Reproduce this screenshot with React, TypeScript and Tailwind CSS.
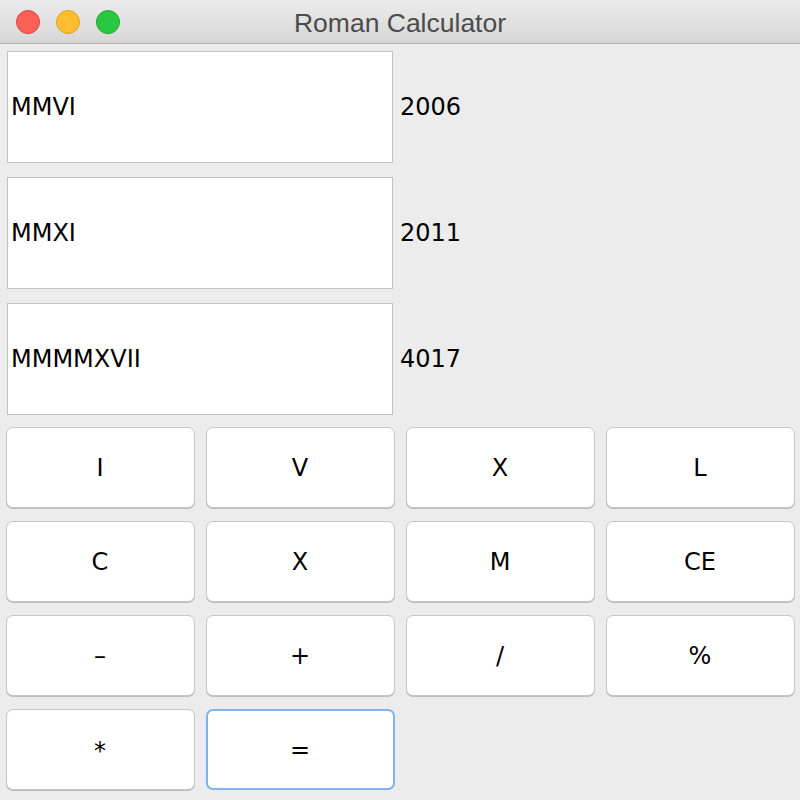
const fields = [
  { roman: "MMVI", value: "2006" },
  { roman: "MMXI", value: "2011" },
  { roman: "MMMMXVII", value: "4017" },
];

const keys = ["I", "V", "X", "L", "C", "X", "M", "CE", "-", "+", "/", "%", "*", "="];

function TrafficLights() {
  return (
    <div className="flex items-center gap-[16px] pl-[16px]">
      <span className="w-[24px] h-[24px] rounded-full bg-[#fe5f57] border border-[#e0443e]" />
      <span className="w-[24px] h-[24px] rounded-full bg-[#febc2e] border border-[#dea123]" />
      <span className="w-[24px] h-[24px] rounded-full bg-[#28c840] border border-[#1aab29]" />
    </div>
  );
}

export default function App() {
  return (
    <div
      className="w-[800px] h-[800px] bg-[#ececec] flex flex-col overflow-hidden"
      style={{ fontFamily: '"DejaVu Sans", sans-serif' }}
    >
      <div className="relative h-[44px] flex items-center bg-gradient-to-b from-[#ececec] to-[#d6d6d6] border-b border-[#b1b1b1]">
        <TrafficLights />
        <div
          className="absolute inset-0 flex items-center justify-center text-[26.5px] text-[#4b4b4b] pt-[4px]"
          style={{ fontFamily: '"Liberation Sans", Arial, sans-serif' }}
        >
          Roman Calculator
        </div>
      </div>

      <div className="flex flex-col gap-[14px] pt-[7px] pl-[7px]">
        {fields.map((f) => (
          <div key={f.value} className="flex items-center">
            <div className="w-[386px] h-[112px] bg-white border border-[#c2c2c2] flex items-center pl-[3px] text-[24px] text-black">
              {f.roman}
            </div>
            <div className="pl-[7px] text-[24px] text-black">{f.value}</div>
          </div>
        ))}
      </div>

      <div className="grid grid-cols-[189px_189px_189px_189px] auto-rows-[81px] gap-x-[11px] gap-y-[13px] pt-[12px] pl-[5.5px]">
        {keys.map((k, i) => (
          <button
            key={i}
            type="button"
            className={
              k === "="
                ? "bg-white rounded-[7px] border-2 border-[#7fb3eb] flex items-center justify-center text-[24px] text-black"
                : "bg-white rounded-[7px] border border-[#c6c6c6] shadow-[0_1px_0_#bdbdbd] flex items-center justify-center text-[24px] text-black"
            }
          >
            {k === "-" ? "–" : k === "*" ? <span className="pt-[3px]">*</span> : k}
          </button>
        ))}
      </div>
    </div>
  );
}
